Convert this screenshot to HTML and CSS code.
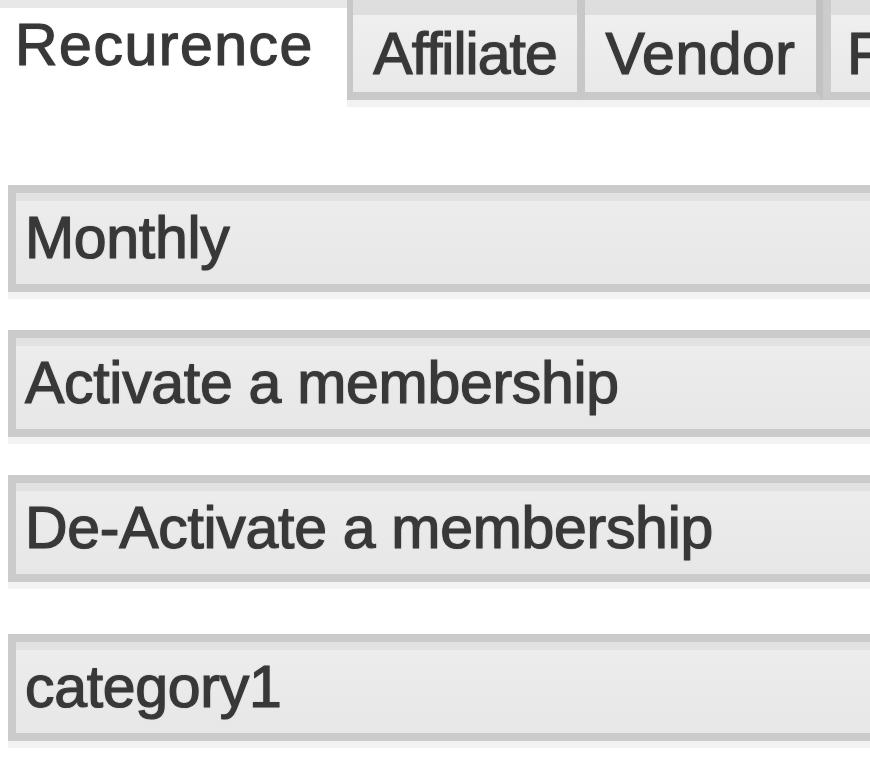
FILE: index.html
```html
<!DOCTYPE html>
<html>
<head>
  <meta charset="utf-8" />
  <title>Recurrence</title>
  <link rel="stylesheet" href="styles.css">
</head>
<body>
<div class="page">
  <div class="tabs">
    <div class="tab active">Recurence</div>
    <div class="tab">Affiliate</div>
    <div class="tab vendor">Vendor</div>
    <div class="tab last">F</div>
  </div>
  <div class="form">
    <div class="field">Monthly</div>
    <div class="field">Activate a membership</div>
    <div class="field">De-Activate a membership</div>
    <div class="field category">category1</div>
  </div>
</div>
</body>
</html>
```
FILE: styles.css
```css
html, body {
  margin: 0;
  padding: 0;
  background: #fff;
}

.page {
  width: 870px;
  height: 769px;
  overflow: hidden;
  font-family: "Liberation Sans", Arial, sans-serif;
  font-size: 59px;
  line-height: 1;
  color: #383838;
  -webkit-text-stroke: 1.2px #383838;
  text-shadow: 0 0 2px rgba(60, 60, 90, 0.35);
}

.tabs {
  display: flex;
  height: 100px;
  background: #fff;
}

.tab {
  box-sizing: border-box;
  flex: none;
  height: 100px;
  background: linear-gradient(#dedede 15px, #efefef 15px, #e9e9e9);
  border-left: 6px solid #c8c8c8;
  border-bottom: 8px solid #c9c9c9;
  box-shadow: 0 7px 0 #f2f2f2;
  padding-top: 25px;
  width: 230px;
  text-align: center;
  letter-spacing: -1px;
}

.tab.active {
  width: 347px;
  background: linear-gradient(#e8e8e8 8px, #fff 8px);
  border: 0;
  box-shadow: none;
  padding-top: 16px;
  padding-left: 15px;
  text-align: left;
  letter-spacing: 1.5px;
}

.tab.vendor {
  width: 246px;
  border-left-width: 8px;
  border-right: 7px solid #c2c2c2;
  letter-spacing: 0.5px;
}

.tab.last {
  width: 60px;
  border-left: 8px solid #cccccc;
  text-align: left;
  padding-left: 16px;
}

.form {
  padding: 85px 0 0 8px;
  display: flex;
  flex-direction: column;
  gap: 38px;
}

.field {
  height: 107px;
  width: 900px;
  box-sizing: border-box;
  border: 8px solid #cbcbcb;
  border-right: 0;
  background: linear-gradient(#ededed, #e7e7e7);
  box-shadow: inset 0 8px 0 #e2e2e2, 0 7px 0 #f3f3f3;
  padding-left: 9px;
  line-height: 91px;
  letter-spacing: -0.3px;
}

.field.category {
  margin-top: 14px;
}
```
